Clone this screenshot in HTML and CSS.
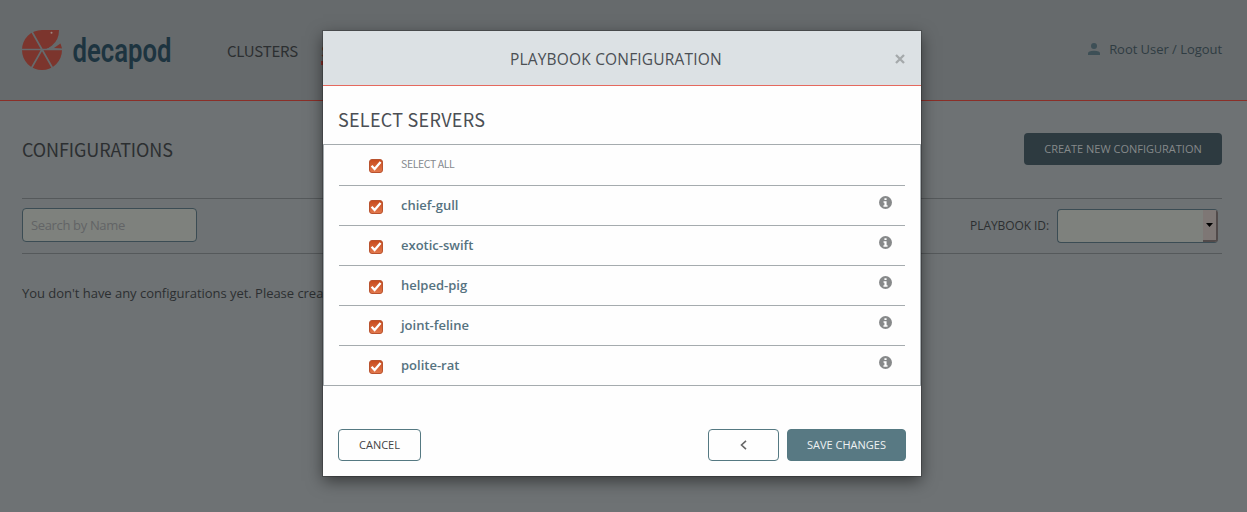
FILE: index.html
```html
<!DOCTYPE html>
<html lang="en">
<head>
<meta charset="utf-8">
<title>Decapod</title>
<link rel="stylesheet" href="styles.css">
</head>
<body>
<svg class="defs" width="0" height="0">
  <defs>
    <linearGradient id="orange" x1="0" y1="0" x2="0" y2="1"><stop offset="0" stop-color="#c74a1c"/><stop offset="1" stop-color="#e37a4e"/></linearGradient>
    <symbol id="check" viewBox="0 0 14 14"><rect x=".5" y=".5" width="13" height="13" rx="2.5" fill="url(#orange)" stroke="#b9532f"/><path d="M2.6 6.800 5.600 10 11.600 3" fill="none" stroke="#fff" stroke-width="2.3"/></symbol>
    <symbol id="info" viewBox="0 0 12 12"><circle cx="6" cy="6" r="6" fill="#87898a"/><path d="M5 2h2v1.7H5zM4.2 4.8H7v3.7h.9V10H4.1V8.5H5V6.2h-.8z" fill="#fff"/></symbol>
  </defs>
</svg>
<header class="header">
  <svg class="logo" width="152" height="44" viewBox="0 0 152 44">
    <path d="M20 1H37Q37 11 30 16.500Q26 20 22 21H40A20 20 0 1 1 20 1Z" fill="#7c352d"/>
    <path d="M22 21Q31 18 37 12L40 18.500V21Z" fill="#666a6c"/>
    <path d="M32 19 38.500 14.500 40 19.500Z" fill="#7c352d"/>
    <path d="M0 20.500H40M20 20.500 9.500 2M20 20.500 9.500 39M20 20.500 30.500 39" stroke="#666a6c" stroke-width="1.700" fill="none"/>
    <circle cx="29.500" cy="3.800" r="1" fill="#a08882"/>
    <text class="wordmark" x="50.500" y="32.500" textLength="99" lengthAdjust="spacingAndGlyphs">decapod</text>
  </svg>
  <nav class="nav"><a>CLUSTERS</a><a class="active">SERVERS</a></nav>
  <div class="user">
    <svg width="12" height="12" viewBox="0 0 12 12" fill="#3d4f56"><circle cx="6" cy="3" r="3"/><path d="M0 12V10.200Q0 7.700 6 7.700T12 10.200V12Z"/></svg>
    <span>Root User / Logout</span>
  </div>
</header>
<main class="page">
  <div class="title-row"><h1>CONFIGURATIONS</h1><button class="create">CREATE NEW CONFIGURATION</button></div>
  <div class="filters">
    <div class="search">Search by Name</div>
    <div class="filter"><span>PLAYBOOK ID:</span><div class="select"><div class="drop"><svg width="7" height="4"><path d="M0 0H7L3.500 4Z"/></svg></div></div></div>
  </div>
  <p class="empty">You don't have any configurations yet. Please create a new one.</p>
</main>
<section class="modal">
  <div class="modal-head"><span>PLAYBOOK CONFIGURATION</span><svg class="close" width="10" height="10" viewBox="0 0 10 10"><path d="M1 1 9 9M9 1 1 9" stroke="#a5a9ab" stroke-width="2.3"/></svg></div>
  <h2>SELECT SERVERS</h2>
  <div class="list">
    <div class="row all"><svg class="check"><use href="#check"/></svg><span>SELECT ALL</span></div>
    <div class="row"><svg class="check"><use href="#check"/></svg><span>chief-gull</span><svg class="info"><use href="#info"/></svg></div>
    <div class="row"><svg class="check"><use href="#check"/></svg><span>exotic-swift</span><svg class="info"><use href="#info"/></svg></div>
    <div class="row"><svg class="check"><use href="#check"/></svg><span>helped-pig</span><svg class="info"><use href="#info"/></svg></div>
    <div class="row"><svg class="check"><use href="#check"/></svg><span>joint-feline</span><svg class="info"><use href="#info"/></svg></div>
    <div class="row"><svg class="check"><use href="#check"/></svg><span>polite-rat</span><svg class="info"><use href="#info"/></svg></div>
  </div>
  <div class="actions">
    <button class="btn cancel">CANCEL</button>
    <button class="btn back"><svg width="7" height="10" viewBox="0 0 7 10"><path d="M6 .8 1.500 5 6 9.200" fill="none" stroke="#666" stroke-width="1.600"/></svg></button>
    <button class="btn save">SAVE CHANGES</button>
  </div>
</section>
</body>
</html>
```
FILE: styles.css
```css
* { box-sizing: border-box; }
body { margin: 0; height: 512px; overflow: hidden; background: #6e7274; color: #2c2f31; font: 13px/20px "Open Sans", sans-serif; }
.defs { position: absolute; }
button { font-family: inherit; padding: 0; }
h1, h2 { margin: 0; font-family: "Noto Sans CJK SC", sans-serif; font-weight: 400; }

.header { height: 101px; padding: 0 25px 0 22px; display: flex; align-items: flex-start; background: #666a6c; border-bottom: 1px solid #8a2f28; }
.logo { margin-top: 29px; overflow: visible; }
.wordmark { font: 600 34px Roboto, sans-serif; fill: #1d3440; }
.nav { display: flex; margin: 41px 0 0 53px; font: 15px/20px "Noto Sans CJK SC", sans-serif; letter-spacing: -.2px; }
.nav a { width: 94px; }
.nav .active { color: #7c352d; height: 24px; border-bottom: 4px solid #8a2f28; }
.user { display: flex; align-items: center; gap: 9px; margin: 39px 0 0 auto; color: #2f3c42; letter-spacing: -.04px; }

.page { padding: 0 25px 0 22px; }
.title-row { display: flex; justify-content: space-between; padding-top: 32px; height: 97px; }
h1 { font-size: 18px; line-height: 32px; letter-spacing: -.1px; }
.create { width: 198px; height: 32px; border: 0; border-radius: 4px; background: #2d3a40; color: #85898a; font-size: 11px; padding-bottom: 2px; }
.filters { height: 56px; border: solid #55595b; border-width: 1px 0; display: flex; justify-content: space-between; align-items: flex-start; padding: 9px 4px 0 0; }
.search { width: 175px; height: 34px; border: 1px solid #3b4c54; border-radius: 4px; background: #7e817d; color: #626466; padding: 7px 8px; line-height: 19px; letter-spacing: -.35px; }
.filter { display: flex; align-items: center; gap: 8px; font-size: 12px; margin-top: 1px; letter-spacing: -.08px; }
.select { width: 161px; height: 34px; border: 1px solid #3b4c54; border-right: 0; border-radius: 4px; background: #7e817d; display: flex; justify-content: flex-end; overflow: hidden; }
.drop { width: 15px; border: solid #514a4a; border-width: 0 2px 2px 0; background: #7e7775; display: flex; align-items: center; justify-content: center; }
.empty { margin: 29px 0 0; white-space: nowrap; letter-spacing: -.03px; }

.modal { position: absolute; left: 323px; top: 31px; width: 598px; height: 445px; background: #fefefe; box-shadow: 0 0 0 1px rgba(0,0,0,.2), 0 5px 15px rgba(0,0,0,.5); color: #4b4f54; }
.modal-head { height: 55px; background: #dce1e4; border-bottom: 1px solid #e5695e; display: flex; align-items: center; padding: 2px 16px 0 187px; justify-content: space-between; font-size: 15.500px; letter-spacing: .18px; }
h2 { font-size: 18px; line-height: 26px; padding: 20px 15px 12px; letter-spacing: .27px; }
.list { height: 242px; border: 1px solid #a5abae; padding: 0 15px; }
.row { height: 40px; display: flex; align-items: flex-start; padding: 10px 13px 0 30px; border-bottom: 1px solid #a5abae; font-weight: 600; line-height: 19px; color: #557280; }
.row:last-child { border-bottom: 0; }
.row.all { height: 41px; font: 10.500px/18px "Noto Sans CJK SC", sans-serif; color: #85898f; letter-spacing: -.38px; }
.check { width: 14px; height: 14px; margin: 4px 18px 0 0; }
.info { width: 13px; height: 13px; margin: 0 0 0 auto; }
.actions { display: flex; padding: 43px 15px 0; }
.btn { height: 32px; border: 1px solid #557982; border-radius: 4px; background: #fefefe; color: #444; font-size: 11px; display: flex; align-items: center; justify-content: center; padding-bottom: 2px; }
.cancel { width: 83px; }
.back { width: 71px; margin: 0 8px 0 auto; padding-bottom: 1px; }
.save { width: 119px; background: #587983; color: #eef2f3; }
```
